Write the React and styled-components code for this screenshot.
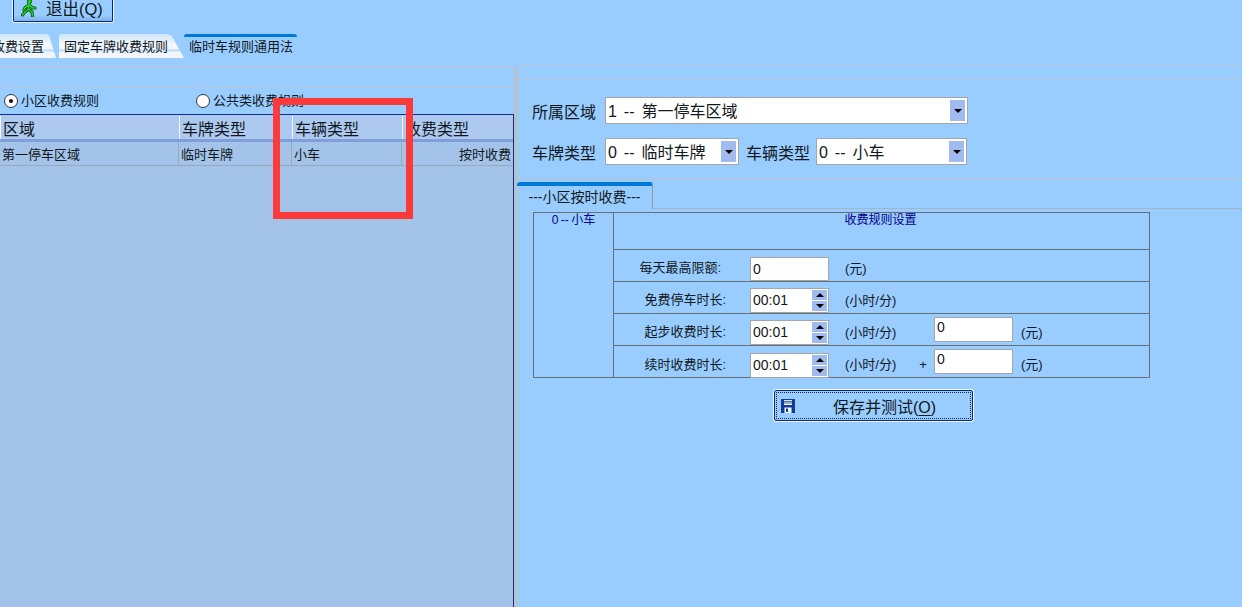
import React from "react";
import styled, { createGlobalStyle } from "styled-components";

const GlobalStyle = createGlobalStyle`
  html, body { margin: 0; padding: 0; background: #99ccff; }
  * { box-sizing: border-box; }
`;

const Page = styled.div`
  position: relative;
  width: 1242px;
  height: 607px;
  overflow: hidden;
  background: #99ccff;
  color: #101820;
  font-family: "Liberation Sans", "Noto Sans CJK SC", sans-serif;
`;

const Toolbar = styled.div`
  height: 34px;
  padding-left: 13px;
`;

const ExitButton = styled.div`
  display: flex;
  align-items: center;
  width: 100px;
  height: 22px;
  padding: 0 0 5px 7px;
  gap: 9px;
  font-size: 16.5px;
  background: linear-gradient(#99ccff 70%, #7fb2ee);
  border: 1px solid #0c2a66;
  border-top: none;
  box-shadow: 0 0 0 1px #e8f3ff;
  border-radius: 0 0 2px 2px;
`;

const TabStrip = styled.div`
  display: flex;
  height: 23px;
  margin-left: -13px;
`;

const PageTab = styled.div`
  height: ${(p) => (p.$active ? "23px" : "24px")};
  width: ${(p) => p.$width}px;
  margin-right: ${(p) => p.$gap}px;
  padding: ${(p) => (p.$active ? "2px 0 0 5px" : "5px 0 0 5px")};
  font-size: 13px;
  line-height: 16px;
  white-space: nowrap;
  background: ${(p) =>
    p.$active ? "#99ccff" : "linear-gradient(#cfe6fc, #f4f8fc 45%, #f0f5fb 62%, #b4d8fb 68%, #f2f6fb 76%)"};
  border-top: ${(p) => (p.$active ? "3px solid #0078d7" : "none")};
  border-radius: 3px 3px 0 0;
  clip-path: ${(p) => (p.$active ? "none" : "polygon(0 0, 86% 0, 90% 6%, 100% 100%, 0 100%)")};
`;

const Split = styled.div`
  display: flex;
  height: 550px;
`;

const LeftPane = styled.div`
  width: 514px;
  padding-top: 10px;
  display: flex;
  flex-direction: column;
`;

const PaneLine = styled.div`
  flex: none;
  height: ${(p) => p.$height}px;
  margin-right: 2px;
  border-top: 1px solid #b9c5d2;
`;

const RadioRow = styled.div`
  display: flex;
  flex: none;
  height: 26px;
  padding: 5px 0 0 4px;
  font-size: 13px;
  line-height: 16px;
`;

const RadioItem = styled.label`
  display: flex;
  align-items: center;
  gap: 3px;
  height: 16px;
  width: ${(p) => p.$width}px;
  white-space: nowrap;
`;

const RadioDot = styled.span`
  display: flex;
  align-items: center;
  justify-content: center;
  width: 14px;
  height: 14px;
  border-radius: 50%;
  background: #fff;
  border: 1px solid #333;
  &::after {
    content: "";
    width: 4px;
    height: 4px;
    border-radius: 50%;
    background: ${(p) => (p.$checked ? "#111" : "transparent")};
  }
`;

const Grid = styled.div`
  flex: 1;
  background: #a3c3e9;
  border-top: 1px solid #0c2f94;
  border-right: 1px solid #0c2f94;
`;

const GridHead = styled.div`
  display: grid;
  grid-template-columns: 179px 113px 110px 1fr;
  height: 27px;
  background: #adc9f0;
  border-bottom: 3px solid #7f9fdb;
`;

const HeadCell = styled.div`
  padding: 3px 0 0 2px;
  font-size: 16px;
  line-height: 21px;
  border-left: 1px solid #f2f7ff;
  height: 23px;
  margin-top: 1px;
`;

const GridRow = styled.div`
  display: grid;
  grid-template-columns: 179px 113px 110px 1fr;
  height: 24px;
  border-bottom: 1px solid #98a9bf;
`;

const BodyCell = styled.div`
  padding: 4px 2px 0 2px;
  font-size: 13px;
  line-height: 17px;
  text-align: ${(p) => (p.$right ? "right" : "left")};
  border-right: ${(p) => (p.$last ? "none" : "1px solid #98a9bf")};
`;

const Splitter = styled.div`
  width: 3px;
  margin-top: 10px;
  background: #c0c0c0;
`;

const RightPane = styled.div`
  flex: 1;
  margin-top: 8px;
`;

const RightHead = styled.div`
  height: 13px;
  border-top: 1px solid #b9c5d2;
  border-radius: 3px 0 0 0;
`;

const FormArea = styled.div`
  height: 102px;
  padding: 18px 0 0 15px;
  border-top: 1px solid #b9c5d2;
  border-bottom: 1px solid #b9c5d2;
`;

const FormRow = styled.div`
  display: flex;
  align-items: center;
  height: 27px;
  margin-bottom: 14px;
`;

const FormLabel = styled.span`
  width: ${(p) => p.$width}px;
  white-space: nowrap;
  font-size: 16px;
`;

const Select = styled.div`
  display: flex;
  justify-content: space-between;
  width: ${(p) => p.$width}px;
  height: 27px;
  padding: 2px;
  margin-right: ${(p) => p.$gap || 0}px;
  background: #fff;
  border: 1px solid #a5a5a5;
  font-size: 16px;
  line-height: 24px;
  word-spacing: 2.5px;
  white-space: pre;
`;

const SelectArrow = styled.span`
  display: flex;
  align-items: center;
  justify-content: center;
  width: 15px;
  height: 100%;
  background: #a0bbf0;
  &::after {
    content: "";
    border-left: 4px solid transparent;
    border-right: 4px solid transparent;
    border-top: 4px solid #000;
  }
`;

const InnerTabs = styled.div`
  display: flex;
  height: 28px;
  margin-top: 1px;
`;

const InnerTab = styled.div`
  width: 136px;
  height: 27px;
  margin-top: 1px;
  text-align: center;
  font-size: 14px;
  line-height: 22px;
  border-top: 4px solid #0078d7;
  border-right: 1px solid #8d9aa8;
  border-radius: 3px 3px 0 0;
`;

const InnerTabRest = styled.div`
  flex: 1;
  border-bottom: 1px solid #a8b4c0;
`;

const RuleWrap = styled.div`
  padding: 3px 0 0 16px;
`;

const RuleTable = styled.div`
  display: grid;
  grid-template-columns: 80px 535px;
  width: 617px;
  height: 166px;
  border: 1px solid #666e76;
`;

const CarCell = styled.div`
  color: #00008b;
  font-size: 12px;
  line-height: 14px;
  word-spacing: -1px;
  text-align: center;
  border-right: 1px solid #666e76;
`;

const RuleColumn = styled.div`
  display: flex;
  flex-direction: column;
`;

const RuleTitle = styled.div`
  height: 37px;
  color: #00008b;
  font-size: 12px;
  line-height: 14px;
  padding-right: 2px;
  text-align: center;
  border-bottom: 1px solid #666e76;
`;

const RuleRow = styled.div`
  display: flex;
  align-items: center;
  height: 32px;
  font-size: 13px;
  border-bottom: ${(p) => (p.$last ? "none" : "1px solid #666e76")};
`;

const RuleLabel = styled.span`
  width: 136px;
  padding: 2px ${(p) => p.$pad}px 0 0;
  text-align: right;
  white-space: nowrap;
`;

const TextInput = styled.div`
  width: 79px;
  height: ${(p) => p.$height}px;
  padding: ${(p) => p.$pt}px 0 0 2px;
  align-self: ${(p) => (p.$top ? "flex-start" : "flex-end")};
  margin-top: ${(p) => (p.$top ? 3 : 0)}px;
  background: #fff;
  border: 1px solid #a5a5a5;
  font-size: 14px;
  line-height: 16px;
`;

const Spinner = styled.div`
  display: flex;
  justify-content: space-between;
  align-self: flex-end;
  width: 79px;
  height: 25px;
  padding: 1px;
  background: #fff;
  border: 1px solid #a5a5a5;
  font-size: 14px;
  line-height: 21px;
  & > span:first-child { padding-left: 1px; }
`;

const SpinButtons = styled.span`
  display: flex;
  flex-direction: column;
  gap: 1px;
  width: 15px;
`;

const SpinButton = styled.span`
  flex: 1;
  display: flex;
  align-items: center;
  justify-content: center;
  background: #a0bbf0;
  &::after {
    content: "";
    border-left: 4px solid transparent;
    border-right: 4px solid transparent;
    ${(p) => (p.$up ? "border-bottom: 4px solid #000;" : "border-top: 4px solid #000;")}
  }
`;

const Unit = styled.span`
  width: ${(p) => p.$width}px;
  margin-left: ${(p) => p.$left}px;
  padding-top: 3px;
  white-space: nowrap;
`;

const Plus = styled.span`
  display: inline-block;
  margin-left: 23px;
`;

const ButtonRow = styled.div`
  padding: 12px 0 0 241px;
`;

const SaveButton = styled.div`
  display: flex;
  align-items: center;
  width: 199px;
  height: 31px;
  padding-left: 6px;
  font-size: 16px;
  background: #99ccff;
  border: 1px solid #0c2a66;
  border-radius: 2px;
  box-shadow: 0 0 0 1px #eef6ff;
  outline: 1px dotted #10204a;
  outline-offset: -3px;
`;

const SaveText = styled.span`
  margin-left: 38px;
  u { text-underline-offset: 2px; }
`;

const Highlight = styled.div`
  position: absolute;
  left: 273px;
  top: 98px;
  width: 140px;
  height: 121px;
  border: 7px solid #fd3a3a;
`;

const RunnerIcon = () => (
  <svg width="16" height="17" viewBox="0 0 16 17" fill="none">
    <path
      d="M8 3 L7.5 9 M8 5 L4 7.5 L3 10 M8 5 L12 8 L14 8 M7.5 9 L4 12 L1.5 15 M7.5 9 L11 12 L11.5 16"
      stroke="#06401a"
      strokeWidth="3"
      strokeLinecap="round"
      strokeLinejoin="round"
    />
    <circle cx="8.5" cy="1.5" r="2.2" fill="#1fd01f" stroke="#06401a" strokeWidth="0.8" />
    <path
      d="M8 3 L7.5 9 M8 5 L4 7.5 L3 10 M8 5 L12 8 L14 8 M7.5 9 L4 12 L1.5 15 M7.5 9 L11 12 L11.5 16"
      stroke="#22d822"
      strokeWidth="1.6"
      strokeLinecap="round"
      strokeLinejoin="round"
    />
  </svg>
);

const FloppyIcon = () => (
  <svg width="14" height="14" viewBox="0 0 14 14">
    <path d="M0 0H14V14H0Z" fill="#0f3c96" />
    <path d="M3 1H11V6H3Z" fill="#f4f8ff" />
    <path d="M3 2.4H11M3 4H11" stroke="#0f3c96" strokeWidth="0.8" />
    <path d="M3.5 8.5H10.5V14H3.5Z" fill="#f4f8ff" />
    <path d="M5 9.5H7V13H5Z" fill="#0f3c96" />
  </svg>
);

const columns = ["区域", "车牌类型", "车辆类型", "收费类型"];

const TimeField = () => (
  <Spinner>
    <span>00:01</span>
    <SpinButtons>
      <SpinButton $up />
      <SpinButton />
    </SpinButtons>
  </Spinner>
);

export default function App() {
  return (
    <Page>
      <GlobalStyle />
      <Toolbar>
        <ExitButton>
          <RunnerIcon />
          <span>退出(Q)</span>
        </ExitButton>
      </Toolbar>
      <TabStrip>
        <PageTab $width={69} $gap={3}>收费设置</PageTab>
        <PageTab $width={125} $gap={0}>固定车牌收费规则</PageTab>
        <PageTab $active $width={113} $gap={0}>临时车规则通用法</PageTab>
      </TabStrip>
      <Split>
        <LeftPane>
          <PaneLine $height={20} />
          <PaneLine $height={1} />
          <RadioRow>
            <RadioItem $width={192}>
              <RadioDot $checked />
              小区收费规则
            </RadioItem>
            <RadioItem $width={120}>
              <RadioDot />
              公共类收费规则
            </RadioItem>
          </RadioRow>
          <Grid>
            <GridHead>
              {columns.map((c) => (
                <HeadCell key={c}>{c}</HeadCell>
              ))}
            </GridHead>
            <GridRow>
              <BodyCell>第一停车区域</BodyCell>
              <BodyCell>临时车牌</BodyCell>
              <BodyCell>小车</BodyCell>
              <BodyCell $right $last>按时收费</BodyCell>
            </GridRow>
          </Grid>
        </LeftPane>
        <Splitter />
        <RightPane>
          <RightHead />
          <FormArea>
            <FormRow>
              <FormLabel $width={73}>所属区域</FormLabel>
              <Select $width={363}>
                {"1 -- 第一停车区域"}
                <SelectArrow />
              </Select>
            </FormRow>
            <FormRow>
              <FormLabel $width={73}>车牌类型</FormLabel>
              <Select $width={134} $gap={7}>
                {"0 -- 临时车牌"}
                <SelectArrow />
              </Select>
              <FormLabel $width={70}>车辆类型</FormLabel>
              <Select $width={151}>
                {"0 -- 小车"}
                <SelectArrow />
              </Select>
            </FormRow>
          </FormArea>
          <InnerTabs>
            <InnerTab>---小区按时收费---</InnerTab>
            <InnerTabRest />
          </InnerTabs>
          <RuleWrap>
            <RuleTable>
              <CarCell>0 -- 小车</CarCell>
              <RuleColumn>
                <RuleTitle>收费规则设置</RuleTitle>
                <RuleRow>
                  <RuleLabel $pad={29}>每天最高限额:</RuleLabel>
                  <TextInput $height={24} $pt={3}>0</TextInput>
                  <Unit $left={16} $width={60}>(元)</Unit>
                </RuleRow>
                <RuleRow>
                  <RuleLabel $pad={24}>免费停车时长:</RuleLabel>
                  <TimeField />
                  <Unit $left={16} $width={60}>(小时/分)</Unit>
                </RuleRow>
                <RuleRow>
                  <RuleLabel $pad={24}>起步收费时长:</RuleLabel>
                  <TimeField />
                  <Unit $left={16} $width={89}>(小时/分)</Unit>
                  <TextInput $top $height={25} $pt={1}>0</TextInput>
                  <Unit $left={8} $width={30}>(元)</Unit>
                </RuleRow>
                <RuleRow $last>
                  <RuleLabel $pad={24}>续时收费时长:</RuleLabel>
                  <TimeField />
                  <Unit $left={16} $width={89}>(小时/分)<Plus>+</Plus></Unit>
                  <TextInput $top $height={25} $pt={1}>0</TextInput>
                  <Unit $left={8} $width={30}>(元)</Unit>
                </RuleRow>
              </RuleColumn>
            </RuleTable>
            <ButtonRow>
              <SaveButton>
                <FloppyIcon />
                <SaveText>保存并测试(<u>O</u>)</SaveText>
              </SaveButton>
            </ButtonRow>
          </RuleWrap>
        </RightPane>
      </Split>
      <Highlight />
    </Page>
  );
}
